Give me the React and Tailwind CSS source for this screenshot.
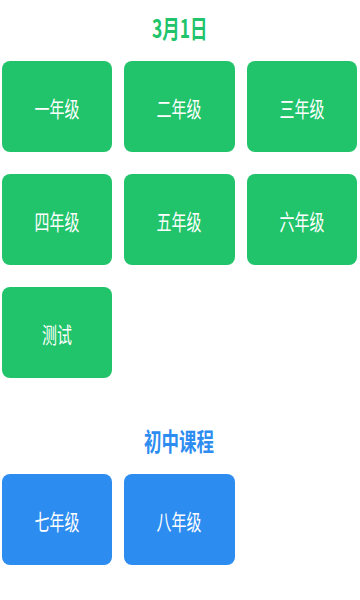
import React from "react"

const primary = ["一年级", "二年级", "三年级", "四年级", "五年级", "六年级", "测试"]
const junior = ["七年级", "八年级"]

const font = { fontFamily: '"Noto Sans CJK SC", "Noto Sans", sans-serif' }

const Card = ({ label, color }) => (
  <div className={`h-[91px] rounded-lg flex items-center justify-center ${color}`}>
    <span className="text-white text-[22px] scale-x-[0.68] leading-none">{label}</span>
  </div>
)

const Section = ({ title, titleColor, cardColor, items }) => (
  <div>
    <div className="h-[54px] flex items-center justify-center">
      <h2 className={`text-[25px] font-bold leading-none scale-x-[0.7] ${titleColor}`}>{title}</h2>
    </div>
    <div className="mt-[7px] grid grid-cols-3 gap-x-3 gap-y-[22px]">
      {items.map((item) => (
        <Card key={item} label={item} color={cardColor} />
      ))}
    </div>
  </div>
)

export default function App() {
  return (
    <div className="min-h-[600px] bg-white pl-[2px] pr-[3px]" style={font}>
      <Section title="3月1日" titleColor="text-[#21c46a]" cardColor="bg-[#21c46a]" items={primary} />
      <div className="mt-[35px]">
        <Section title="初中课程" titleColor="text-[#2d8cf0]" cardColor="bg-[#2d8cf0]" items={junior} />
      </div>
    </div>
  )
}
